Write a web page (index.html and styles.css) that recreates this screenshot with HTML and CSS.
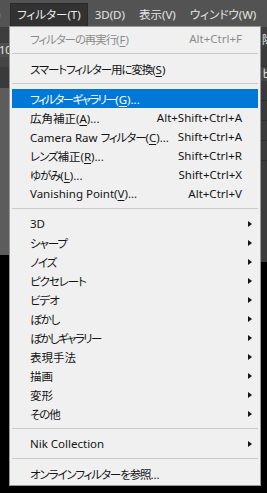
FILE: index.html
```html
<!DOCTYPE html>
<html lang="ja">
    <head>
        <title>フィルター</title>
        <meta charset="utf-8">
        <meta name="viewport" content="width=device-width, initial-scale=1.0">
        <link rel="stylesheet" href="styles.css">
    </head>
    <body>
        <div class="app">
            <div class="menubar">
                <span class="menu-cut">)</span>
                <span class="menu-title open">フィルター(T)</span>
                <span class="menu-title">3D(D)</span>
                <span class="menu-title">表示(V)</span>
                <span class="menu-title">ウィンドウ(W)</span>
            </div>
            <div class="workspace">
                <div class="side-left">
                    <div class="strip strip-dark"></div>
                    <div class="strip strip-field">10</div>
                    <div class="strip strip-mid"></div>
                    <div class="strip strip-dark2"></div>
                    <div class="strip strip-panel"></div>
                </div>
                <div class="canvas"></div>
                <div class="side-right">
                    <div class="strip strip-head">除</div>
                    <div class="strip strip-row"></div>
                    <div class="strip strip-tab">ヒ</div>
                    <div class="strip strip-row"></div>
                    <div class="strip strip-row"></div>
                    <div class="strip strip-row"></div>
                    <div class="strip strip-row"></div>
                    <div class="strip strip-rest"></div>
                </div>
            </div>

            <div class="dropdown">
                <div class="item disabled">
                    <span class="label"><span class="ja">フィルターの再実行</span>(<u>F</u>)</span>
                    <span class="shortcut">Alt+Ctrl+F</span>
                </div>
                <div class="sep"></div>
                <div class="item">
                    <span class="label"><span class="ja">スマートフィルター用に変換</span>(<u>S</u>)</span>
                </div>
                <div class="sep"></div>
                <div class="item selected">
                    <span class="label"><span class="ja kana">フィルターギャラリー</span>(<u>G</u>)...</span>
                </div>
                <div class="item">
                    <span class="label">広角補正(<u>A</u>)...</span>
                    <span class="shortcut">Alt+Shift+Ctrl+A</span>
                </div>
                <div class="item">
                    <span class="label">Camera Raw <span class="ja">フィルター</span>(<u>C</u>)...</span>
                    <span class="shortcut">Shift+Ctrl+A</span>
                </div>
                <div class="item">
                    <span class="label"><span class="ja">レンズ</span>補正(<u>R</u>)...</span>
                    <span class="shortcut">Shift+Ctrl+R</span>
                </div>
                <div class="item">
                    <span class="label"><span class="ja">ゆがみ</span>(<u>L</u>)...</span>
                    <span class="shortcut">Shift+Ctrl+X</span>
                </div>
                <div class="item">
                    <span class="label">Vanishing Point(<u>V</u>)...</span>
                    <span class="shortcut">Alt+Ctrl+V</span>
                </div>
                <div class="sep"></div>
                <div class="item sub"><span class="label">3D</span><span class="arrow"></span></div>
                <div class="item sub"><span class="label ja">シャープ</span><span class="arrow"></span></div>
                <div class="item sub"><span class="label ja">ノイズ</span><span class="arrow"></span></div>
                <div class="item sub"><span class="label ja">ピクセレート</span><span class="arrow"></span></div>
                <div class="item sub"><span class="label ja">ビデオ</span><span class="arrow"></span></div>
                <div class="item sub"><span class="label ja">ぼかし</span><span class="arrow"></span></div>
                <div class="item sub"><span class="label ja kana">ぼかしギャラリー</span><span class="arrow"></span></div>
                <div class="item sub"><span class="label">表現手法</span><span class="arrow"></span></div>
                <div class="item sub"><span class="label">描画</span><span class="arrow"></span></div>
                <div class="item sub"><span class="label">変形</span><span class="arrow"></span></div>
                <div class="item sub"><span class="label"><span class="ja">その</span>他</span><span class="arrow"></span></div>
                <div class="sep"></div>
                <div class="item sub"><span class="label">Nik Collection</span><span class="arrow"></span></div>
                <div class="sep"></div>
                <div class="item">
                    <span class="label"><span class="ja">オンラインフィルターを参照</span>...</span>
                </div>
            </div>
        </div>
    </body>
</html>
```

FILE: styles.css
```css
* {
    margin: 0;
    padding: 0;
    box-sizing: border-box;
}
body {
    width: 267px;
    height: 493px;
    overflow: hidden;
    background-color: black;
    font-family: "Noto Sans", "Noto Sans CJK JP", sans-serif;
    font-feature-settings: "palt";
    font-size: 11.5px;
}
.app {
    position: relative;
    height: 100%;
}

/* top menu bar */
.menubar {
    height: 27px;
    display: flex;
    align-items: flex-start;
    padding-top: 3px;
    background-color: #535353;
    color: #e4e4e4;
    overflow: hidden;
    white-space: nowrap;
}
.menu-cut {
    width: 10px;
    text-indent: -3px;
    line-height: 23px;
    color: #d9a25a;
}
.menu-title {
    height: 23px;
    line-height: 23px;
    padding: 0 7px;
}
.menu-title.open {
    background-color: #323232;
    border: 1px solid #2a2a2a;
    border-bottom: none;
    line-height: 22px;
    padding: 0 6px;
    color: #ededed;
}

/* what lies behind the menu */
.workspace {
    display: flex;
    align-items: flex-start;
}
.side-left {
    width: 9px;
    height: 228px;
    display: flex;
    flex-direction: column;
}
.canvas {
    flex: 1;
}
.side-right {
    width: 6px;
    height: 235px;
    display: flex;
    flex-direction: column;
    overflow: hidden;
}
.strip {
    overflow: hidden;
    white-space: nowrap;
    color: #e6e6e6;
    font-size: 11px;
}
.strip-dark {
    height: 16px;
    background-color: #3d3d3d;
}
.strip-field {
    height: 14px;
    line-height: 14px;
    background-color: #4e4e4e;
    text-indent: -1px;
}
.strip-mid {
    height: 10px;
    background-color: #444444;
}
.strip-dark2 {
    height: 21px;
    background-color: #3a3a3a;
}
.strip-panel {
    flex: 1;
    background-color: #5c5c5c;
}
.strip-head {
    height: 20px;
    padding-top: 6px;
    line-height: 14px;
    background-color: #3f3f3f;
    text-indent: 1px;
}
.strip-row {
    height: 20px;
    background-color: #3a3a3a;
    border-bottom: 1px solid #2f2f2f;
}
.strip-tab {
    height: 14px;
    line-height: 14px;
    background-color: #474747;
    text-indent: 1px;
}
.strip-rest {
    flex: 1;
    background-color: #3c3c3c;
}

/* dropdown menu */
.dropdown {
    position: absolute;
    left: 9px;
    top: 26px;
    width: 252px;
    padding: 2px 0;
    background-color: #f0f0f0;
    border: 1px solid #979797;
    color: #141414;
}
.item {
    height: 19px;
    margin: 0 2px;
    padding: 0 16px 0 18px;
    display: flex;
    align-items: center;
    justify-content: space-between;
    white-space: nowrap;
}
.item.sub {
    padding-right: 6px;
}
.item.disabled {
    color: #8c8c8c;
}
.item.selected {
    background-color: #0078d7;
    color: white;
}
.item u {
    text-underline-offset: 2px;
}
.ja {
    letter-spacing: -1.1px;
}
.ja.kana {
    letter-spacing: -1.6px;
}
.sep {
    height: 1px;
    margin: 5px 2px 5px;
    background-color: #cacaca;
}
.arrow {
    width: 0;
    height: 0;
    border-left: 4px solid #141414;
    border-top: 3.5px solid transparent;
    border-bottom: 3.5px solid transparent;
}
```
